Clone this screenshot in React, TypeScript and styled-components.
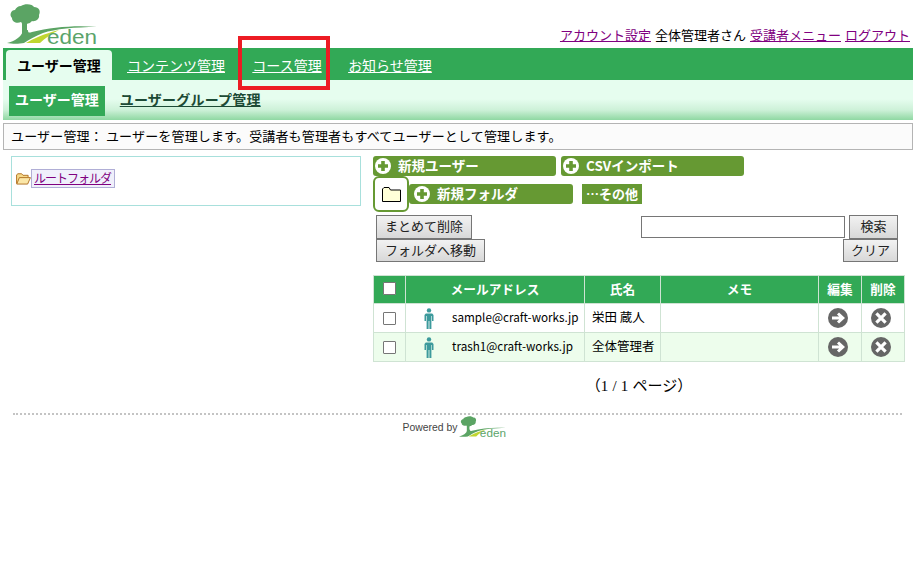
import React from 'react';
import styled, { createGlobalStyle } from 'styled-components';

const GlobalStyle = createGlobalStyle`
  html, body {
    margin: 0;
    padding: 0;
    background: #fff;
  }
  body {
    font-family: "Noto Sans CJK JP", "Liberation Sans", sans-serif;
    font-size: 13px;
    color: #000;
  }
`;

const Page = styled.div`
  position: relative;
  width: 916px;
  height: 588px;
  padding: 0 3px;
  box-sizing: border-box;
  overflow: hidden;
`;

const Header = styled.header`
  height: 48px;
  display: flex;
  justify-content: space-between;
  align-items: flex-start;
`;

const LogoWrap = styled.div`
  padding: 2px 0 0 4px;
`;

const LogoSvg = styled.svg`
  display: block;
  overflow: visible;
`;

const UserMenu = styled.div`
  display: flex;
  gap: 4px;
  padding: 24px 3px 0 0;
  font-size: 13px;
  line-height: 21px;
`;

const UserLink = styled.a`
  color: #800080;
  text-decoration: underline;
`;

const MainTabs = styled.nav`
  height: 32px;
  background: #32a956;
  display: flex;
  align-items: flex-end;
  padding-left: 3px;
`;

const MainTab = styled.a<{ $active?: boolean; $width: number }>`
  height: 30px;
  width: ${p => p.$width}px;
  box-sizing: border-box;
  display: flex;
  align-items: center;
  justify-content: center;
  font-size: 14px;
  border-radius: 4px 4px 0 0;
  color: ${p => (p.$active ? '#000' : '#fff')};
  background: ${p => (p.$active ? '#e6fdef' : 'transparent')};
  font-weight: ${p => (p.$active ? 700 : 400)};
  text-decoration: ${p => (p.$active ? 'none' : 'underline')};
`;

const SubTabs = styled.nav`
  height: 40px;
  box-sizing: border-box;
  background: linear-gradient(#e6fdef 0, #e6fdef 19px, #cdf1d8 30px, #8fd8a2 100%);
  display: flex;
  align-items: flex-start;
  padding: 6px 0 0 6px;
  gap: 15px;
`;

const SubTab = styled.a<{ $active?: boolean }>`
  height: 30px;
  box-sizing: border-box;
  padding: 0 ${p => (p.$active ? 6 : 0)}px 4px;
  display: flex;
  align-items: center;
  font-size: 14px;
  font-weight: 700;
  letter-spacing: ${p => (p.$active ? 0 : 0.2)}px;
  color: ${p => (p.$active ? '#fff' : '#1c4a35')};
  background: ${p => (p.$active ? '#32a956' : 'transparent')};
  text-decoration: ${p => (p.$active ? 'none' : 'underline')};
`;

const Description = styled.div`
  margin-top: 3px;
  height: 27px;
  box-sizing: border-box;
  border: 1px solid #b4b4b4;
  background: #fbfbfb;
  padding: 0 0 2px 7px;
  display: flex;
  align-items: center;
  font-size: 13px;
  letter-spacing: 0.16px;
`;

const Main = styled.main`
  display: flex;
  align-items: flex-start;
  gap: 12px;
  padding: 6px 0 0 8px;
`;

const TreePanel = styled.aside`
  width: 350px;
  height: 50px;
  box-sizing: border-box;
  border: 1px solid #a8e0dc;
  padding: 12px 0 0 4px;
`;

const TreeNode = styled.div`
  display: flex;
  align-items: center;
`;

const TreeLink = styled.a`
  height: 19px;
  box-sizing: border-box;
  border: 1px solid #b0aed6;
  background: #f0f0fb;
  color: #800080;
  font-size: 12px;
  line-height: 16px;
  letter-spacing: -1px;
  padding: 0 3px 0 2px;
  text-decoration: underline;
`;

const Content = styled.section`
  width: 532px;
  display: flex;
  flex-direction: column;
`;

const ToolRow = styled.div`
  display: flex;
  gap: 5px;
`;

const FolderRow = styled.div`
  display: flex;
  align-items: flex-start;
`;

const GreenButton = styled.a<{ $width: number; $inset?: number }>`
  width: ${p => p.$width}px;
  height: 20px;
  box-sizing: border-box;
  background: #669933;
  border-radius: 3px;
  color: #fff;
  font-size: 13.5px;
  font-weight: 700;
  display: flex;
  align-items: center;
  gap: 7px;
  padding-left: ${p => p.$inset ?? 2}px;
`;

const ButtonLabel = styled.span`
  padding-bottom: 2px;
`;

const FolderBox = styled.div`
  width: 36px;
  height: 36px;
  box-sizing: border-box;
  background: #fff;
  border: 2px solid #669933;
  border-radius: 6px;
  display: flex;
  align-items: center;
  justify-content: center;
`;

const FolderActions = styled.div`
  display: flex;
  gap: 9px;
  margin-top: 8px;
`;

const OtherButton = styled.a`
  width: 60px;
  height: 20px;
  box-sizing: border-box;
  padding-bottom: 2px;
  background: #669933;
  color: #fff;
  font-size: 13px;
  font-weight: 700;
  display: flex;
  align-items: center;
  justify-content: center;
`;

const Actions = styled.div`
  display: flex;
  justify-content: space-between;
  padding: 3px 7px 0 3px;
`;

const ButtonStack = styled.div<{ $end?: boolean }>`
  display: flex;
  flex-direction: column;
  align-items: ${p => (p.$end ? 'flex-end' : 'flex-start')};
`;

const SearchLine = styled.div`
  display: flex;
  align-items: flex-start;
  gap: 4px;
`;

const SearchInput = styled.input`
  width: 204px;
  height: 22px;
  margin: 1px 0 0;
  box-sizing: border-box;
  border: 1px solid #767676;
  background: #fff;
  padding: 0;
`;

const GrayButton = styled.button<{ $width: number }>`
  width: ${p => p.$width}px;
  height: 23.5px;
  box-sizing: border-box;
  padding: 0 0 2px;
  border: 1px solid #767676;
  border-radius: 0;
  background: linear-gradient(#f2f2f2, #d8d8d8);
  font-family: inherit;
  font-size: 13px;
  color: #222;
  display: block;
`;

const Table = styled.table`
  margin-top: 13px;
  width: 532px;
  table-layout: fixed;
  border-collapse: collapse;
`;

const Th = styled.th<{ $width?: number }>`
  width: ${p => (p.$width ? `${p.$width}px` : 'auto')};
  height: 28px;
  padding: 0 0 3px;
  box-sizing: border-box;
  border: 1px solid #cfe3d3;
  background: #32a956;
  color: #fff;
  font-size: 12.7px;
  font-weight: 700;
  text-align: center;
`;

const Row = styled.tr<{ $alt?: boolean }>`
  background: ${p => (p.$alt ? '#edfdec' : '#fff')};
`;

const Td = styled.td`
  height: 29px;
  padding: 0;
  box-sizing: border-box;
  border: 1px solid #cfe3d3;
  font-size: 12.5px;
  text-align: left;
  vertical-align: middle;
`;

const NameCell = styled(Td)`
  padding: 0 0 4px 7px;
`;

const EmailCell = styled.div`
  display: flex;
  align-items: center;
  padding-left: 18px;
  gap: 18px;
  font-size: 11.7px;
`;

const EmailText = styled.span`
  padding-bottom: 4px;
`;

const CheckBox = styled.span`
  display: block;
  width: 13px;
  height: 13px;
  margin: 0 auto;
  box-sizing: border-box;
  border: 1px solid #767676;
  background: #fff;
  border-radius: 1px;
`;

const CellIcon = styled.svg`
  display: block;
  flex-shrink: 0;
`;

const IconCellTd = styled(Td)`
  padding-right: 5px;

  ${CellIcon} {
    margin: 0 auto;
  }
`;

const Pager = styled.div`
  margin-top: 14px;
  text-align: center;
  font-family: "Liberation Serif", "Noto Sans CJK JP", serif;
  font-size: 15px;
  word-spacing: 0.5px;
  line-height: 20px;
`;

const Footer = styled.footer`
  margin: 17px 11px 0 10px;
  border-top: 2px dotted #c4c4c4;
  display: flex;
  justify-content: center;
  align-items: center;
  gap: 2px;
  padding-right: 5px;
`;

const PoweredBy = styled.span`
  font-family: "Liberation Sans", sans-serif;
  font-size: 10.4px;
  color: #444;
`;

const Annotation = styled.div`
  position: absolute;
  left: 238px;
  top: 36px;
  width: 92px;
  height: 54px;
  box-sizing: border-box;
  border: 4px solid #ed1c24;
  pointer-events: none;
`;

const Logo = ({ width, height }: { width: number; height: number }) => (
  <LogoSvg width={width} height={height} viewBox="0 0 92 46">
    <path d="M0 41 C8 39 14 35 16 29 L21 28 C21 31 22 31 25 30 C45 25 70 23 90 25 C68 25 48 27 36 31 C28 34 22 38 17 41 C12 42 5 42 0 41Z" fill="#5ba464" />
    <path d="M19 41 C26 37 36 32 52 28 C44 32 38 36 33 41Z" fill="#bfd630" />
    <path d="M14 17 L17 20 L21 17 L23 18 L20 22 L20 30 L15 32 L15 22Z" fill="#5ba464" />
    <path d="M14 4 C18 1 26 2 27 5 C32 5 34 9 32 13 C33 17 28 20 25 19 C22 23 16 22 14 20 C10 22 5 20 5 16 C2 13 4 8 8 8 C9 6 11 4 14 4Z" fill="#5ba464" />
    <text x="40" y="42" fontFamily="Liberation Sans, sans-serif" fontSize="21" fill="#5ba46a" textLength="50" lengthAdjust="spacingAndGlyphs">eden</text>
  </LogoSvg>
);

const PlusIcon = () => (
  <CellIcon width="16" height="16" viewBox="0 0 16 16">
    <circle cx="8" cy="8" r="8" fill="#fff" />
    <path d="M6.2 3h3.6v3.2H13v3.6H9.8V13H6.2V9.8H3V6.2h3.2z" fill="#669933" />
  </CellIcon>
);

const FolderIcon = () => (
  <CellIcon width="19" height="15" viewBox="0 0 19 15">
    <path d="M.5 14.5V2L2 .5h5L8.5 3h10v11.5z" fill="#ffffd8" stroke="#000" />
  </CellIcon>
);

const OpenFolderIcon = () => (
  <CellIcon width="15" height="12" viewBox="0 0 16 13">
    <path d="M.5 11.5V2L2 .8h4L7.5 2.5h5.5V5" fill="#f5d98a" stroke="#b06f1e" />
    <path d="M.7 12 3.5 5H15.5L12.5 12z" fill="#fbe7a8" stroke="#b06f1e" />
  </CellIcon>
);

const PersonIcon = () => (
  <CellIcon width="10" height="21" viewBox="0 0 10 21">
    <circle cx="5" cy="2.4" r="2.2" fill="#3c9a9c" />
    <path d="M1.8 5.5h6.4L9.5 7v6H8v-5H7.4v13H5.4v-8H4.6v8H2.6V8H2v5H.5V7z" fill="#3c9a9c" />
  </CellIcon>
);

const ArrowIcon = () => (
  <CellIcon width="20" height="20" viewBox="0 0 20 20">
    <circle cx="10" cy="10" r="10" fill="#666" />
    <path d="M4 10H14.5M10 5.5L14.8 10L10 14.5" fill="none" stroke="#fff" strokeWidth="3" />
  </CellIcon>
);

const CrossIcon = () => (
  <CellIcon width="20" height="20" viewBox="0 0 20 20">
    <circle cx="10" cy="10" r="10" fill="#666" />
    <path d="M5.4 5.4L14.6 14.6M14.6 5.4L5.4 14.6" fill="none" stroke="#fff" strokeWidth="3.2" />
  </CellIcon>
);

const users = [
  { email: 'sample@craft-works.jp', name: '栄田 蔵人' },
  { email: 'trash1@craft-works.jp', name: '全体管理者' },
];

export default function App() {
  return (
    <Page>
      <GlobalStyle />
      <Header>
        <LogoWrap>
          <Logo width={92} height={46} />
        </LogoWrap>
        <UserMenu>
          <UserLink>アカウント設定</UserLink>
          <span>全体管理者さん</span>
          <UserLink>受講者メニュー</UserLink>
          <UserLink>ログアウト</UserLink>
        </UserMenu>
      </Header>

      <MainTabs>
        <MainTab $active $width={106}>ユーザー管理</MainTab>
        <MainTab $width={128}>コンテンツ管理</MainTab>
        <MainTab $width={94}>コース管理</MainTab>
        <MainTab $width={112}>お知らせ管理</MainTab>
      </MainTabs>

      <SubTabs>
        <SubTab $active>ユーザー管理</SubTab>
        <SubTab>ユーザーグループ管理</SubTab>
      </SubTabs>

      <Description>ユーザー管理： ユーザーを管理します。受講者も管理者もすべてユーザーとして管理します。</Description>

      <Main>
        <TreePanel>
          <TreeNode>
            <OpenFolderIcon />
            <TreeLink>ルートフォルダ</TreeLink>
          </TreeNode>
        </TreePanel>

        <Content>
          <ToolRow>
            <GreenButton $width={183}><PlusIcon /><ButtonLabel>新規ユーザー</ButtonLabel></GreenButton>
            <GreenButton $width={183}><PlusIcon /><ButtonLabel>CSVインポート</ButtonLabel></GreenButton>
          </ToolRow>
          <FolderRow>
            <FolderBox><FolderIcon /></FolderBox>
            <FolderActions>
              <GreenButton $width={164} $inset={5}><PlusIcon /><ButtonLabel>新規フォルダ</ButtonLabel></GreenButton>
              <OtherButton>…その他</OtherButton>
            </FolderActions>
          </FolderRow>
          <Actions>
            <ButtonStack>
              <GrayButton $width={96}>まとめて削除</GrayButton>
              <GrayButton $width={109}>フォルダへ移動</GrayButton>
            </ButtonStack>
            <ButtonStack $end>
              <SearchLine>
                <SearchInput />
                <GrayButton $width={49}>検索</GrayButton>
              </SearchLine>
              <GrayButton $width={55}>クリア</GrayButton>
            </ButtonStack>
          </Actions>

          <Table>
            <thead>
              <tr>
                <Th $width={32}><CheckBox /></Th>
                <Th $width={179}>メールアドレス</Th>
                <Th $width={76}>氏名</Th>
                <Th>メモ</Th>
                <Th $width={43}>編集</Th>
                <Th $width={43}>削除</Th>
              </tr>
            </thead>
            <tbody>
              {users.map((user, i) => (
                <Row key={user.email} $alt={i % 2 === 1}>
                  <Td><CheckBox /></Td>
                  <Td>
                    <EmailCell>
                      <PersonIcon />
                      <EmailText>{user.email}</EmailText>
                    </EmailCell>
                  </Td>
                  <NameCell>{user.name}</NameCell>
                  <Td />
                  <IconCellTd><ArrowIcon /></IconCellTd>
                  <IconCellTd><CrossIcon /></IconCellTd>
                </Row>
              ))}
            </tbody>
          </Table>

          <Pager>（1 / 1 ページ）</Pager>
        </Content>
      </Main>

      <Footer>
        <PoweredBy>Powered by</PoweredBy>
        <Logo width={48} height={24} />
      </Footer>

      <Annotation />
    </Page>
  );
}
